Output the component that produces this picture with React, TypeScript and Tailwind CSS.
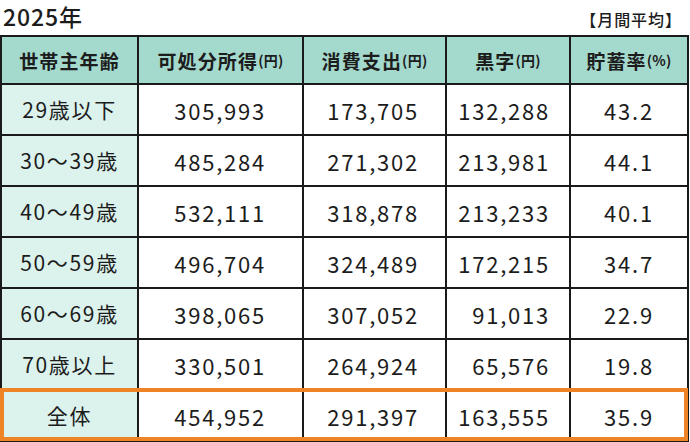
import React from 'react';

type Row = {
  age: string;
  income: string;
  spend: string;
  surplus: string;
  rate: string;
};

const rows: Row[] = [
  { age: '29歳以下', income: '305,993', spend: '173,705', surplus: '132,288', rate: '43.2' },
  { age: '30～39歳', income: '485,284', spend: '271,302', surplus: '213,981', rate: '44.1' },
  { age: '40～49歳', income: '532,111', spend: '318,878', surplus: '213,233', rate: '40.1' },
  { age: '50～59歳', income: '496,704', spend: '324,489', surplus: '172,215', rate: '34.7' },
  { age: '60～69歳', income: '398,065', spend: '307,052', surplus: '91,013', rate: '22.9' },
  { age: '70歳以上', income: '330,501', spend: '264,924', surplus: '65,576', rate: '19.8' },
];

const total: Row = { age: '全体', income: '454,952', spend: '291,397', surplus: '163,555', rate: '35.9' };

const grid = 'grid grid-cols-[137px_165px_143px_124px_118px]';
const cell = 'border-r-2 border-b-2 border-[#1a1a1a] flex items-center';

const BodyRow: React.FC<{ row: Row }> = ({ row }) => (
  <div className={`${grid} h-[51px]`}>
    <div className={`${cell} justify-center bg-[#dcf3ed] text-[21px] tracking-[0.08em]`}>{row.age}</div>
    <div className={`${cell} justify-end pr-[36px] tracking-[0.08em]`}>{row.income}</div>
    <div className={`${cell} justify-end pr-[26px] tracking-[0.08em]`}>{row.spend}</div>
    <div className={`${cell} justify-end pr-[19px] tracking-[0.08em]`}>{row.surplus}</div>
    <div className={`${cell} justify-center tracking-[0.08em]`}>{row.rate}</div>
  </div>
);

const Head: React.FC<{ label: string; unit?: string }> = ({ label, unit }) => (
  <div className={`${cell} justify-center bg-[#a4d9cd] font-bold`}>
    <span className="text-[19px] tracking-[0.06em]">{label}</span>
    {unit && <span className="text-[14px] tracking-[0.02em]">{unit}</span>}
  </div>
);

export default function App() {
  return (
    <div
      className="w-[690px] h-[442px] bg-white text-[#1c1c1c] overflow-hidden"
      style={{ fontFamily: '"Noto Sans CJK JP", "Noto Sans", sans-serif' }}
    >
      <div className="flex items-end justify-between h-[35px] pl-[3px] pr-[8px] pb-[7px]">
        <span className="text-[23px] leading-none font-medium tracking-[0.04em]">2025年</span>
        <span className="text-[16px] leading-none font-medium tracking-[0.06em] mb-[1px]">【月間平均】</span>
      </div>
      <div className="relative w-[689px] text-[22px] leading-none">
        <div className="border-l-2 border-t-2 border-[#1a1a1a]">
          <div className={`${grid} h-[48px]`}>
            <Head label="世帯主年齢" />
            <Head label="可処分所得" unit="(円)" />
            <Head label="消費支出" unit="(円)" />
            <Head label="黒字" unit="(円)" />
            <Head label="貯蓄率" unit="(%)" />
          </div>
          {rows.map((r) => (
            <BodyRow key={r.age} row={r} />
          ))}
          <BodyRow row={total} />
        </div>
        <div className="absolute left-0 right-[1px] bottom-[1px] h-[53px] border-4 border-[#ef8426] pointer-events-none" />
      </div>
    </div>
  );
}
